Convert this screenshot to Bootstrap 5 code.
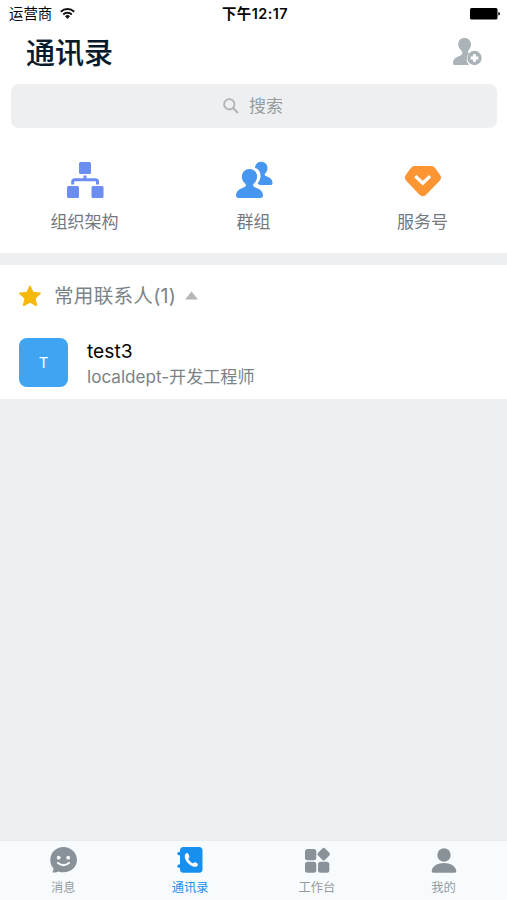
<!DOCTYPE html>
<html lang="zh-CN">
<head>
<meta charset="utf-8">
<meta name="viewport" content="width=device-width, initial-scale=1">
<title>通讯录</title>
<link href="https://cdn.jsdelivr.net/npm/bootstrap@5.3.0/dist/css/bootstrap.min.css" rel="stylesheet">
<style>
body{font-family:Inter,"Noto Sans CJK SC",sans-serif;background:#edeff1;color:#050505}
svg{display:block;flex:none}
.status{height:28px;padding:0 7px 0 9px;font-size:14.4px;line-height:28px}
.side{flex:1 1 0}
.clock{font-weight:600;font-size:14.4px;letter-spacing:.45px;padding-left:1px}
.heading{height:56px;padding:0 25px 8px 26px}
.heading h1{font-size:29px;line-height:48px;font-weight:500;color:#051a2b;-webkit-text-stroke:.12px #051a2b;padding-top:3px}
.search{height:44px;margin:0 10px 0 11px;border-radius:8px;background:#edeff1;color:#989c9e;font-size:17px;line-height:44px;gap:10px;padding-right:2px}
.shortcuts{height:125px;padding-top:32px;color:#727a7f;font-size:17px;line-height:24px}
.shortcuts svg{margin-bottom:10px}
.contacts{margin-top:12px;height:134px}
.group-head{height:61px;padding-left:18px;font-size:19.6px;color:#7b8387}
.group-head span{letter-spacing:.25px;padding-top:2px;margin-right:8px}
.person{padding:10px 19px 12px;gap:19px}
.avatar{width:49px;height:49px;border-radius:8px;background:#3fa5f3;color:#fff;font-size:15px;padding-top:2px}
.person-text{padding-top:2px}
.who{font-size:19.2px;line-height:26px}
.dept{font-size:17.1px;line-height:25px;color:#7b8387}
.tabs{height:60px;background:#f8fbfd;border-top:1px solid #e8ebed;padding-top:5px;font-size:12.3px;line-height:18px;color:#949b9f}
.tabs svg{margin-bottom:5px}
.tabs .on{color:#168fef}
</style>
<script src="https://cdn.jsdelivr.net/npm/bootstrap@5.3.0/dist/js/bootstrap.bundle.min.js"></script>
</head>
<body>
<div class="d-flex flex-column vh-100 overflow-hidden">
  <header class="bg-white">
    <div class="status d-flex align-items-center">
      <div class="side d-flex align-items-center gap-2">运营商
        <svg width="15" height="12" viewBox="0 0 15 12" fill="none" stroke="#111" stroke-width="1.900"><path d="M.8 3.700a9.600 9.600 0 0 1 13.400 0M3.200 6.500a6.100 6.100 0 0 1 8.600 0"/><path d="M5 8.300a3.600 3.600 0 0 1 5 0L7.500 11z" fill="#111" stroke="none"/></svg>
      </div>
      <div class="clock">下午12:17</div>
      <div class="side d-flex justify-content-end">
        <svg width="30" height="12" viewBox="0 0 30 12"><rect width="27.500" height="11.500" rx="1.500"/><path d="M28.300 4q1.700.3 1.700 1.800t-1.700 1.800z"/></svg>
      </div>
    </div>
    <div class="heading d-flex align-items-center justify-content-between">
      <h1 class="m-0">通讯录</h1>
      <svg width="29" height="28" viewBox="0 0 29 28" fill="#aab4b8"><path d="M11.500 0C15.300 0 18 2.700 18 6.200c0 2.800-1.200 4.600-2.600 6.300-.7.900-.5 2.200.6 2.700-3 3.300-3 8.600.1 11.800H2c-1.400 0-2-.8-2-2.100 0-3.600 2.300-5.100 5.900-6.700 2.300-1 3.400-1.500 3.400-3.400 0-1.300-.5-1.900-1.400-2.800C6.300 10.400 5.200 8.700 5.200 6.200 5.200 2.700 7.700 0 11.500 0z"/><circle cx="21.500" cy="20" r="7.200"/><path d="M21.500 16.200v7.600m-3.800-3.800h7.600" stroke="#fff" stroke-width="2.900"/></svg>
    </div>
    <div class="search d-flex justify-content-center align-items-center">
      <svg width="16" height="16" viewBox="0 0 16 16" fill="none" stroke="#b0b4b6" stroke-width="1.800"><circle cx="6.300" cy="6.300" r="5.200"/><path d="M10 10l5 5" stroke-width="2.100"/></svg><span>搜索</span>
    </div>
    <nav class="shortcuts row g-0 text-center">
      <div class="col d-flex flex-column align-items-center">
        <svg width="38" height="40" viewBox="0 0 38 40" fill="#6c8df1"><rect x="13" y="2" width="12" height="12" rx="1.500"/><rect x="1" y="26" width="12" height="12" rx="1.500"/><rect x="25.500" y="26" width="12" height="12" rx="1.500"/><path d="M19 15.500V20M6.700 24.500V22q0-2.200 2.200-2.200h20.400q2.200 0 2.200 2.200v2.500" fill="none" stroke="#6c8df1" stroke-width="3"/></svg>组织架构
      </div>
      <div class="col d-flex flex-column align-items-center">
        <svg width="38" height="40" viewBox="0 0 38 40" fill="#4797f0"><path d="M26 1.700c4 0 6.500 2.800 6.500 6.200 0 2.600-1.100 4.200-2.400 5.500-.8.900-.5 2.100.6 2.500 4.100 1.500 6.800 3 6.800 7 0 1.300-.7 2.100-2 2.100H24.800c-.9-.7-1.500-1.100-2.300-1.600 2.900-3.400 4-7.600 2.200-11.600-.9-2-2.500-3.400-4.700-4.100.3-3.200 2.600-6 6-6z"/><path d="M14.500 9c4.500 0 7.600 3.300 7.600 7.700 0 3.100-1.500 5.100-3.200 6.900-1.200 1.300-.9 3 .5 3.400 4.900 1.600 8.600 4.100 8.600 8.600 0 1.500-.9 2.400-2.400 2.400H3.400C1.900 38 1 37.100 1 35.600 1 31.100 4.700 28.600 9.600 27c1.400-.4 1.700-2.100.5-3.400-1.700-1.800-3.200-3.800-3.200-6.900C6.900 12.300 10 9 14.500 9z"/></svg>群组
      </div>
      <div class="col d-flex flex-column align-items-center">
        <svg width="38" height="40" viewBox="0 0 38 40"><path d="M10.500 8.500h16.800q1 0 1.700.9l5 6.800q1 1.400-.1 2.800L20.300 33q-1.500 1.500-3 0L4 19q-1.100-1.400-.1-2.800l5-6.800q.6-.9 1.600-.9z" fill="#fd9632" stroke="#fd9632" stroke-width="5" stroke-linejoin="round"/><path d="M12.500 17.300l6.200 6 6.200-6" fill="none" stroke="#fff" stroke-width="3.300" stroke-linecap="square"/></svg>服务号
      </div>
    </nav>
  </header>
  <main class="flex-grow-1">
    <section class="contacts bg-white">
      <div class="group-head d-flex align-items-center">
        <svg width="24" height="24" viewBox="0 0 24 24"><path d="M12 2.500l2.800 6.200 7.200.7-5.300 4.800 1.500 7L12 17.700l-6.200 3.500 1.500-7L2 9.400l7.200-.7z" fill="#f5b90b" stroke="#f5b90b" stroke-width="1.800" stroke-linejoin="round"/></svg>
        <span class="ms-2 ps-1">常用联系人(1)</span>
        <svg width="15" height="9" viewBox="0 0 15 9"><path d="M7.500 .5L14 8.500H1z" fill="#b3b6b8"/></svg>
      </div>
      <div class="person d-flex align-items-center">
        <div class="avatar d-flex align-items-center justify-content-center">T</div>
        <div class="person-text"><div class="who">test3</div><div class="dept">localdept-开发工程师</div></div>
      </div>
    </section>
  </main>
  <nav class="tabs row g-0 text-center">
    <div class="col d-flex flex-column align-items-center">
      <svg width="28" height="28" viewBox="0 0 28 28" fill="#899299"><path d="M14.500 1C21.700 1 28 6.500 28 13.800S22 26.300 14.500 26.300c-1.900 0-3.500-.3-5-.9-1.400.8-3.400 1.200-5.200 1.100-.8-.1-.9-.7-.5-1.300.8-1 .9-2.200.3-3.200C2.300 20.100 1.300 17.200 1.300 13.800 1.300 6.500 7.200 1 14.500 1z"/><g fill="#f8fbfd"><circle cx="9.700" cy="11.700" r="1.900"/><circle cx="19.200" cy="11.700" r="1.900"/></g><path d="M9 17q5.500 4.400 11 0" fill="none" stroke="#f8fbfd" stroke-width="2.200" stroke-linecap="round"/></svg>消息
    </div>
    <div class="col on d-flex flex-column align-items-center">
      <svg width="28" height="28" viewBox="0 0 28 28"><path d="M7.500 1H23q3.500 0 3.500 3.500v18.700q0 3.500-3.500 3.500H7.500q-3.500 0-3.500-3.500V22q-2.800 0-2.800-1.800T4 18.300V9.500q-2.800 0-2.800-1.800T4 5.800V4.500Q4 1 7.500 1z" fill="#168fef"/><path d="M9.700 7.700c1.100-1 2.100-.7 2.800.5l.7 1.500c.5 1 .2 1.500-.5 2.200-.4.400-.4.800-.1 1.400.8 1.600 2 2.800 3.500 3.700.7.400 1.100.3 1.500-.1.700-.8 1.200-.9 2.100-.4l1.300.8c1.200.8 1.200 1.700.3 2.700-1.300 1.200-3.200 1-5.400-.1-3.100-1.500-5.400-4-6.600-7-.8-2.200-.8-4.100.4-5.200z" fill="#fff"/></svg>通讯录
    </div>
    <div class="col d-flex flex-column align-items-center">
      <svg width="28" height="28" viewBox="0 0 28 28" fill="#899299"><rect x="2" y="3" width="11.300" height="11.300" rx="2.500"/><rect x="2" y="15.700" width="11.300" height="11" rx="2.500"/><rect x="15" y="15.700" width="11.300" height="11" rx="2.500"/><rect x="15.800" y="3.200" width="9.800" height="9.800" rx="1.600" transform="rotate(45 20.700 8.100)"/></svg>工作台
    </div>
    <div class="col d-flex flex-column align-items-center">
      <svg width="28" height="28" viewBox="0 0 28 28" fill="#899299"><circle cx="14" cy="9" r="6.700"/><path d="M3.200 26.700q-1.800 0-1.500-1.900C2.600 19.800 7.600 17 14 17s11.400 2.800 12.300 7.800q.3 1.900-1.500 1.900z"/></svg>我的
    </div>
  </nav>
</div>
</body>
</html>
